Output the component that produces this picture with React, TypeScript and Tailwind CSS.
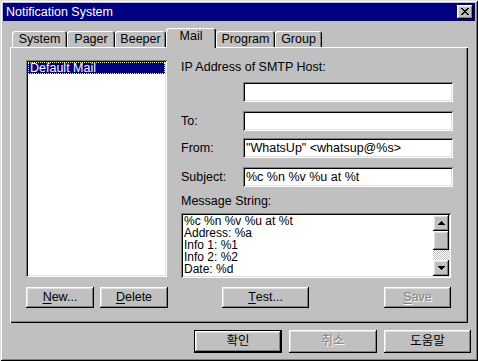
import type { ReactNode } from 'react'

const raised = 'shadow-[inset_-1px_-1px_0_#000,inset_1px_1px_0_#fff,inset_-2px_-2px_0_#808080,inset_2px_2px_0_#dfdfdf]'
const sunken = 'shadow-[inset_1px_1px_0_#808080,inset_-1px_-1px_0_#fff,inset_2px_2px_0_#000,inset_-2px_-2px_0_#dfdfdf]'

function Btn({ children, className = '', disabled = false }: { children: ReactNode; className?: string; disabled?: boolean }) {
  return (
    <div
      className={`flex items-center justify-center bg-[#c0c0c0] ${raised} ${className} ${
        disabled ? 'text-[#808080] [text-shadow:1px_1px_0_#fff]' : 'text-black'
      }`}
    >
      {children}
    </div>
  )
}

function U({ children }: { children: ReactNode }) {
  return <span className="underline decoration-1 underline-offset-[2px]">{children}</span>
}

function Field({ label, value = '' }: { label?: string; value?: string }) {
  return (
    <div className="flex items-center">
      <div className="w-[62px]">{label}</div>
      <div className={`w-[210px] h-[20px] bg-white ${sunken} pl-[3px] flex items-center whitespace-nowrap overflow-hidden`}>
        {value}
      </div>
    </div>
  )
}

function Arrow({ up }: { up?: boolean }) {
  return (
    <svg width="7" height="4" viewBox="0 0 7 4" shapeRendering="crispEdges">
      {up ? <polygon points="3.5,0 7,4 0,4" fill="#000" /> : <polygon points="0,0 7,0 3.5,4" fill="#000" />}
    </svg>
  )
}

function CloseX() {
  const rows = ['11000011', '01100110', '00111100', '00011000', '00111100', '01100110', '11000011']
  return (
    <svg width="8" height="7" viewBox="0 0 8 7" shapeRendering="crispEdges">
      {rows.flatMap((r, y) =>
        r.split('').map((c, x) => (c === '1' ? <rect key={`${x}-${y}`} x={x} y={y} width="1" height="1" fill="#000" /> : null))
      )}
    </svg>
  )
}

const tabs = [
  { label: 'System', w: 'w-[55px]' },
  { label: 'Pager', w: 'w-[48px]' },
  { label: 'Beeper', w: 'w-[51px]' },
  { label: 'Mail', w: 'w-[50px]', active: true },
  { label: 'Program', w: 'w-[59px]' },
  { label: 'Group', w: 'w-[47px]' },
]

const messageLines = ['%c %n %v %u at %t', 'Address: %a', 'Info 1: %1', 'Info 2: %2', 'Date: %d']

export default function App() {
  return (
    <div
      className="w-[478px] h-[361px] bg-[#c0c0c0] p-[3px] flex flex-col text-[12.5px] leading-[15px] text-black font-['Liberation_Sans','Noto_Sans_CJK_KR',sans-serif] shadow-[inset_1px_1px_0_#dfdfdf,inset_-1px_-1px_0_#000,inset_2px_2px_0_#fff,inset_-2px_-2px_0_#808080] overflow-hidden"
    >
      {/* title bar */}
      <div className="h-[18px] bg-[#000080] flex items-center justify-between pl-[3px] pr-[2px] text-white">
        <span>Notification System</span>
        <div className={`w-[16px] h-[14px] bg-[#c0c0c0] ${raised} flex items-center justify-center pb-[1px]`}>
          <CloseX />
        </div>
      </div>

      {/* tabs */}
      <div className="mt-[7px] ml-[9px] h-[19px] flex items-end">
        {tabs.map(t =>
          t.active ? (
            <div
              key={t.label}
              className={`${t.w} h-[20px] -mb-[1px] relative z-10 bg-[#c0c0c0] rounded-t-[3px] shadow-[inset_1px_1px_0_#fff,inset_-1px_0_0_#000,inset_-2px_0_0_#808080] flex justify-center pt-[1px]`}
            >
              {t.label}
            </div>
          ) : (
            <div
              key={t.label}
              className={`${t.w} h-[16px] bg-[#c0c0c0] rounded-t-[3px] shadow-[inset_1px_1px_0_#fff,inset_-1px_0_0_#000,inset_-2px_0_0_#808080] flex items-center justify-center`}
            >
              {t.label}
            </div>
          )
        )}
      </div>

      {/* tab panel */}
      <div className="ml-[7px] w-[458px] h-[276px] shadow-[inset_1px_1px_0_#fff,inset_-1px_-1px_0_#000,inset_-2px_-2px_0_#808080] flex pt-[13px] pl-[16px]">
        <div className="flex flex-col">
          <div className={`w-[141px] h-[217px] bg-white ${sunken} p-[2px]`}>
            <div className="h-[12px] bg-[#000080] text-white border border-dotted border-[#ffff80] flex items-center pl-[1px] leading-[12px]">
              Default Mail
            </div>
          </div>
          <div className="mt-[10px] flex gap-[6px]">
            <Btn className="w-[68px] h-[21px]">
              <U>N</U>ew...
            </Btn>
            <Btn className="w-[68px] h-[21px]">
              <U>D</U>elete
            </Btn>
          </div>
        </div>

        <div className="ml-[13px] flex flex-col">
          <div className="h-[16px]">IP Address of SMTP Host:</div>
          <div className="mt-[6px]">
            <Field />
          </div>
          <div className="mt-[9px]">
            <Field label="To:" />
          </div>
          <div className="mt-[7px]">
            <Field label="From:" value={'"WhatsUp" <whatsup@%s>'} />
          </div>
          <div className="mt-[9px]">
            <Field label="Subject:" value="%c %n %v %u at %t" />
          </div>
          <div className="mt-[7px] h-[15px]">Message String:</div>
          <div className={`mt-[4px] w-[270px] h-[65px] bg-white ${sunken} p-[2px] flex`}>
            <div className="flex-1 pl-[1px] text-[12px] leading-[12px] overflow-hidden">
              {messageLines.map(l => (
                <div key={l} className="h-[12px] whitespace-nowrap">
                  {l}
                </div>
              ))}
            </div>
            <div className="w-[16px] flex flex-col">
              <Btn className="h-[16px] shrink-0">
                <Arrow up />
              </Btn>
              <Btn className="h-[19px] shrink-0">{null}</Btn>
              <div className="flex-1 bg-[repeating-conic-gradient(#c0c0c0_0%_25%,#ffffff_0%_50%)] bg-[length:2px_2px]" />
              <Btn className="h-[16px] shrink-0">
                <Arrow />
              </Btn>
            </div>
          </div>
          <div className="mt-[9px] flex">
            <Btn className="ml-[41px] w-[87px] h-[21px]">
              <U>T</U>est...
            </Btn>
            <Btn className="ml-[75px] w-[67px] h-[21px]" disabled>
              <U>S</U>ave
            </Btn>
          </div>
        </div>
      </div>

      {/* dialog buttons */}
      <div className="mt-[7px] mr-[4px] flex justify-end gap-[7px]">
        <div className="w-[88px] h-[23px] border border-black">
          <Btn className="w-full h-full">확인</Btn>
        </div>
        <Btn className="w-[88px] h-[23px]" disabled>
          취소
        </Btn>
        <Btn className="w-[87px] h-[23px]">도움말</Btn>
      </div>
    </div>
  )
}
